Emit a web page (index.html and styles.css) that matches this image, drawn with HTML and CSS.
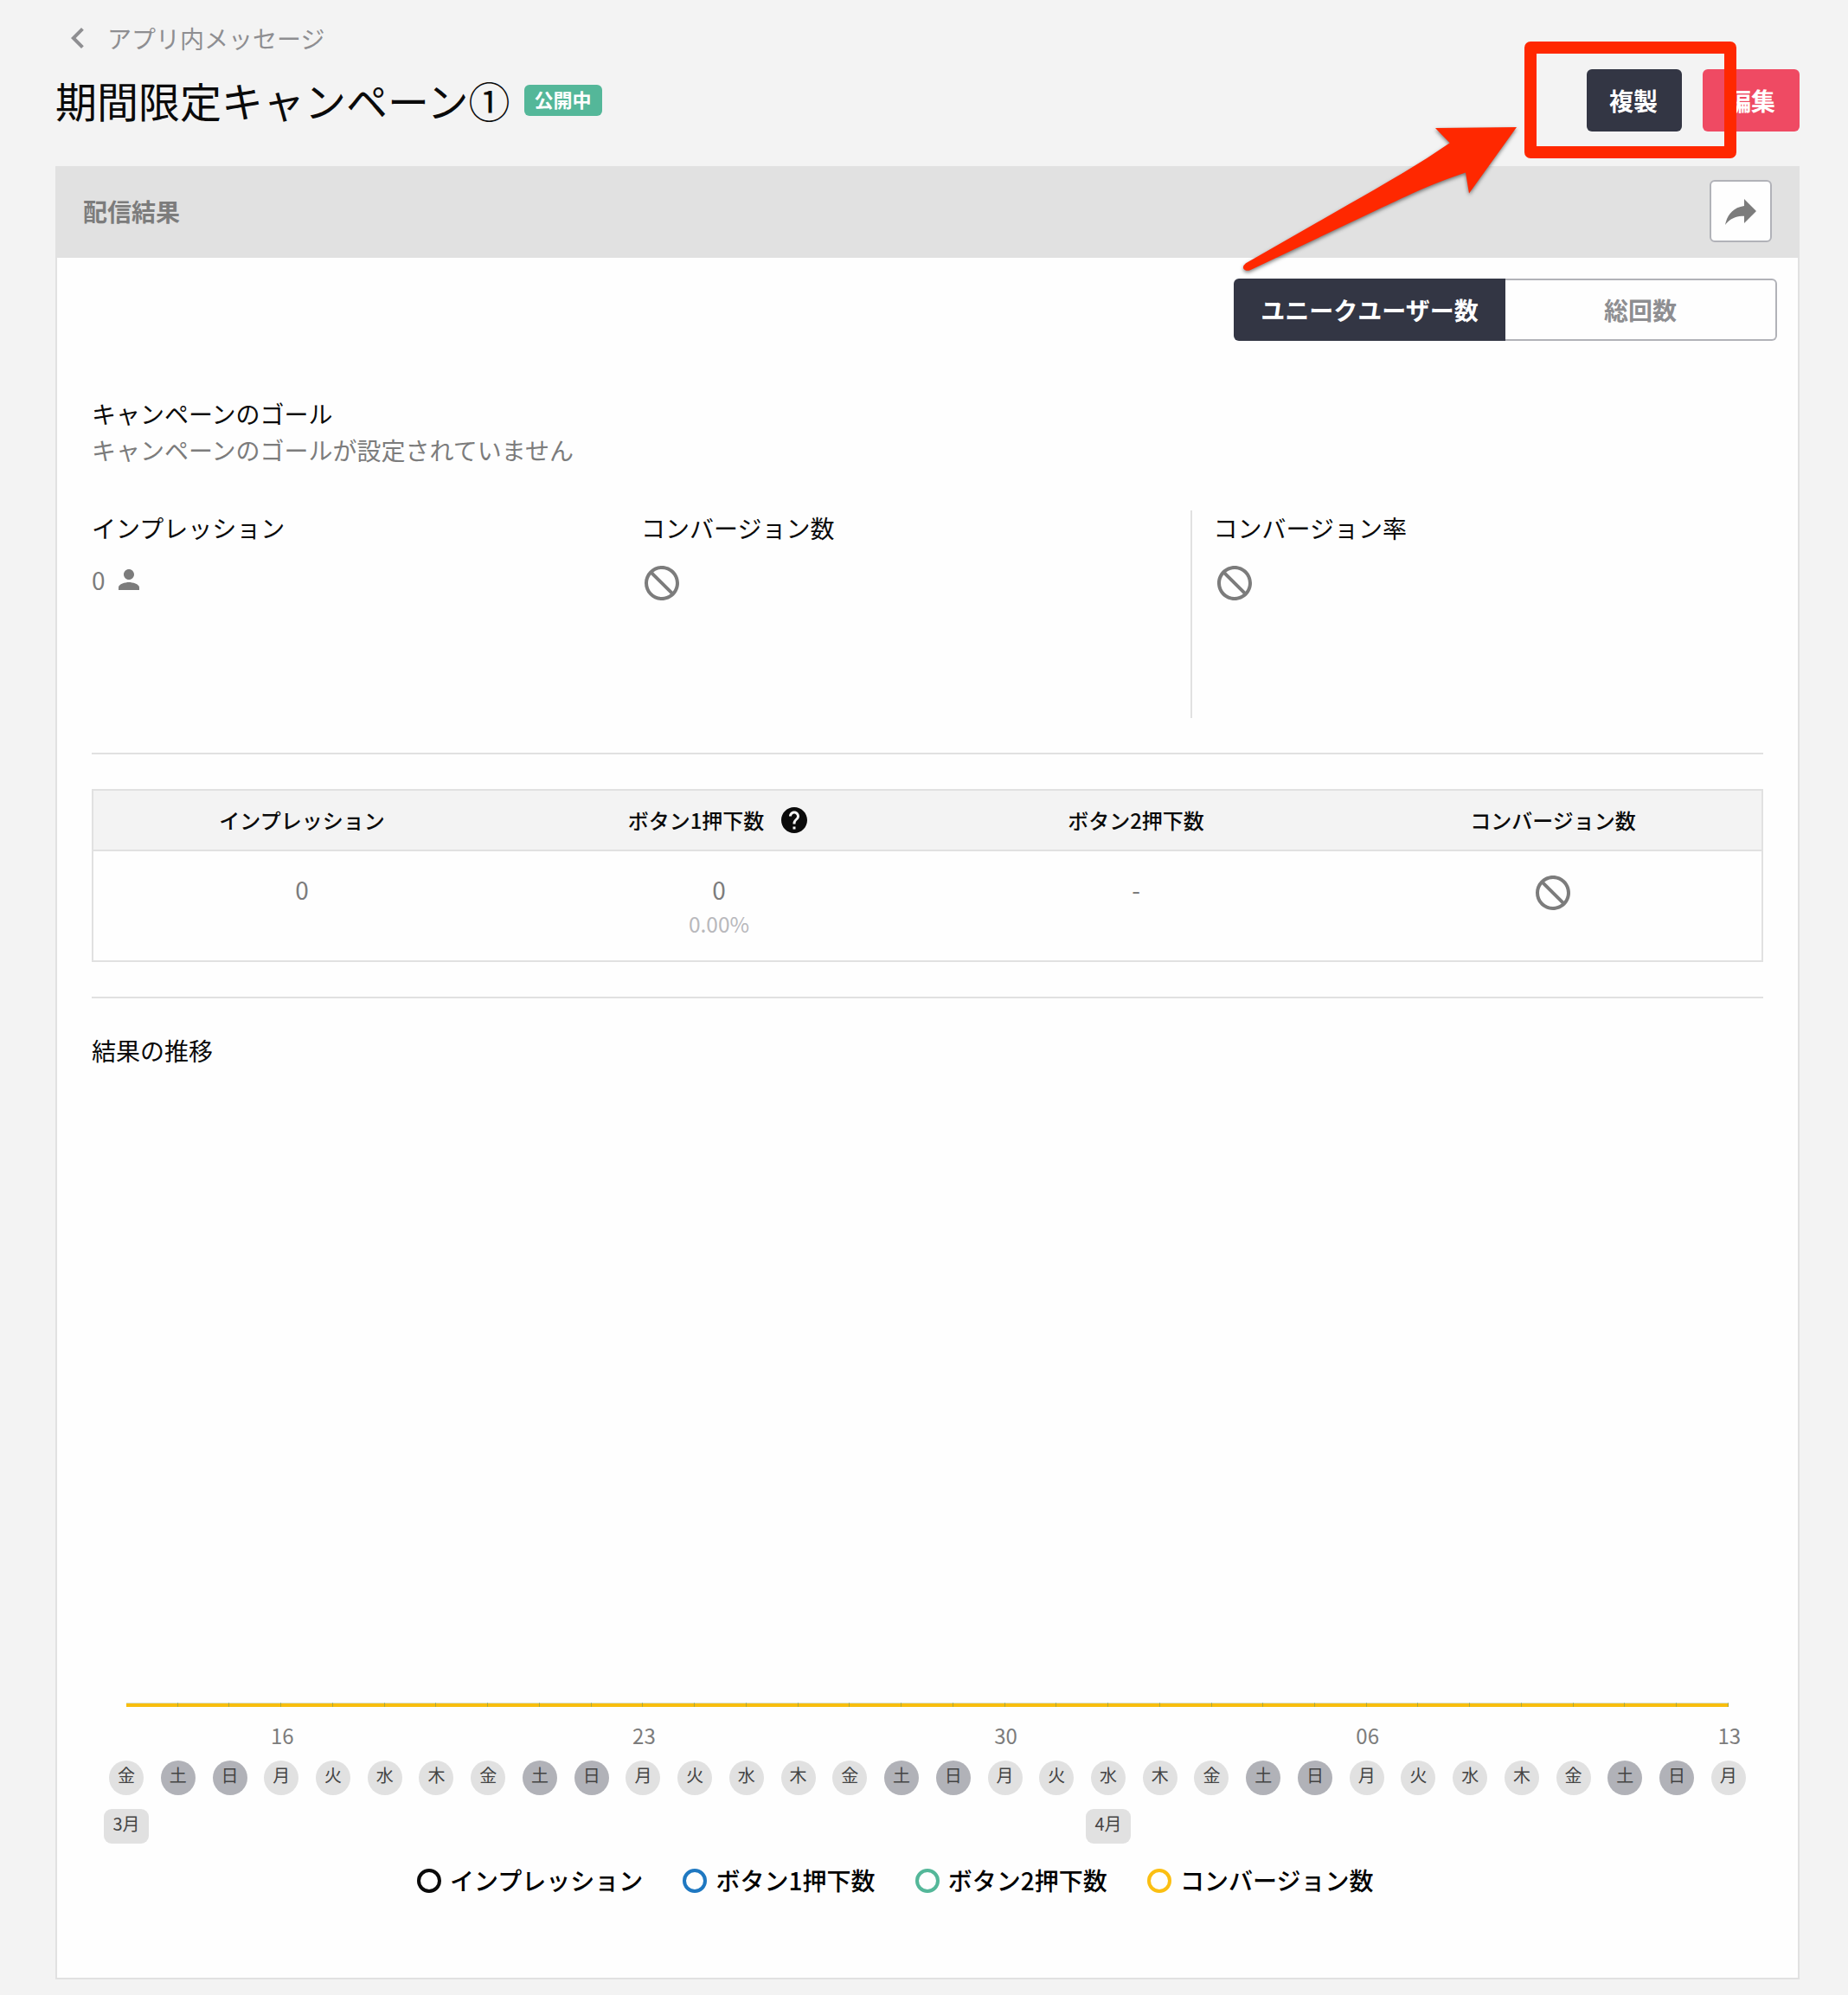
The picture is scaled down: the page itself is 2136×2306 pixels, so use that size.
FILE: index.html
```html
<!DOCTYPE html>
<html lang="ja">
<head>
<meta charset="utf-8">
<title>期間限定キャンペーン①</title>
<link rel="stylesheet" href="styles.css">
</head>
<body>
<svg class="sprite" aria-hidden="true">
  <symbol id="block" viewBox="0 0 24 24"><path transform="matrix(-1 0 0 1 24 0)" d="M12 2C6.48 2 2 6.48 2 12s4.48 10 10 10 10-4.48 10-10S17.52 2 12 2zM4 12c0-4.42 3.58-8 8-8 1.85 0 3.55.63 4.9 1.69L5.69 16.9C4.63 15.55 4 13.85 4 12zm8 8c-1.85 0-3.55-.63-4.9-1.69L18.31 7.1C19.37 8.45 20 10.15 20 12c0 4.42-3.58 8-8 8z"/></symbol>
</svg>
<main class="page">
  <nav class="breadcrumb">
    <svg class="chevron" viewBox="0 0 24 24"><path d="M15.41 7.41L14 6l-6 6 6 6 1.41-1.41L10.83 12z"/></svg>
    <a>アプリ内メッセージ</a>
  </nav>
  <header class="title-row">
    <h1>期間限定キャンペーン①</h1>
    <span class="badge">公開中</span>
    <div class="actions">
      <button class="btn btn-dark">複製</button>
      <button class="btn btn-pink">編集</button>
    </div>
  </header>

  <section class="panel">
    <div class="panel-head">
      <h2>配信結果</h2>
      <button class="share"><svg viewBox="0 0 24 24"><path d="M14 9V5l7 7-7 7v-4.1c-5 0-8.500 1.600-11 5.100 1-5 4-10 11-11z"/></svg></button>
    </div>
    <div class="segment">
      <span class="seg seg-on">ユニークユーザー数</span>
      <span class="seg seg-off">総回数</span>
    </div>
    <div class="content">
      <div class="goal">
        <p>キャンペーンのゴール</p>
        <p class="muted">キャンペーンのゴールが設定されていません</p>
      </div>
      <div class="stats">
        <div class="stat">
          <p>インプレッション</p>
          <div class="value"><span>0</span><svg class="person" viewBox="0 0 24 24"><path d="M12 12c2.210 0 4-1.790 4-4s-1.790-4-4-4-4 1.790-4 4 1.790 4 4 4zm0 2c-2.670 0-8 1.340-8 4v2h16v-2c0-2.660-5.330-4-8-4z"/></svg></div>
        </div>
        <div class="stat">
          <p>コンバージョン数</p>
          <svg class="block"><use href="#block"/></svg>
        </div>
        <div class="stat stat-rate">
          <p>コンバージョン率</p>
          <svg class="block"><use href="#block"/></svg>
        </div>
      </div>
      <hr>
      <div class="table">
        <div class="row row-head">
          <div>インプレッション</div>
          <div>ボタン1押下数<svg class="help" viewBox="0 0 24 24"><path d="M12 2C6.480 2 2 6.480 2 12s4.480 10 10 10 10-4.480 10-10S17.520 2 12 2zm1 17h-2v-2h2v2zm2.070-7.750l-.9.920C13.450 12.900 13 13.500 13 15h-2v-.5c0-1.100.45-2.100 1.170-2.830l1.240-1.260c.37-.36.59-.86.59-1.410 0-1.100-.9-2-2-2s-2 .9-2 2H8c0-2.210 1.790-4 4-4s4 1.790 4 4c0 .88-.36 1.680-.93 2.250z"/></svg></div>
          <div>ボタン2押下数</div>
          <div>コンバージョン数</div>
        </div>
        <div class="row row-body">
          <div>0</div>
          <div>0<small>0.00%</small></div>
          <div>-</div>
          <div><svg class="block"><use href="#block"/></svg></div>
        </div>
      </div>
      <hr>
      <h3>結果の推移</h3>
      <div class="plot"><div class="series"></div></div>
      <div class="axis">
        <div class="day"><i></i><b>金</b><em>3月</em></div>
        <div class="day off"><i></i><b>土</b></div>
        <div class="day off"><i></i><b>日</b></div>
        <div class="day"><i>16</i><b>月</b></div>
        <div class="day"><i></i><b>火</b></div>
        <div class="day"><i></i><b>水</b></div>
        <div class="day"><i></i><b>木</b></div>
        <div class="day"><i></i><b>金</b></div>
        <div class="day off"><i></i><b>土</b></div>
        <div class="day off"><i></i><b>日</b></div>
        <div class="day"><i>23</i><b>月</b></div>
        <div class="day"><i></i><b>火</b></div>
        <div class="day"><i></i><b>水</b></div>
        <div class="day"><i></i><b>木</b></div>
        <div class="day"><i></i><b>金</b></div>
        <div class="day off"><i></i><b>土</b></div>
        <div class="day off"><i></i><b>日</b></div>
        <div class="day"><i>30</i><b>月</b></div>
        <div class="day"><i></i><b>火</b></div>
        <div class="day"><i></i><b>水</b><em>4月</em></div>
        <div class="day"><i></i><b>木</b></div>
        <div class="day"><i></i><b>金</b></div>
        <div class="day off"><i></i><b>土</b></div>
        <div class="day off"><i></i><b>日</b></div>
        <div class="day"><i>06</i><b>月</b></div>
        <div class="day"><i></i><b>火</b></div>
        <div class="day"><i></i><b>水</b></div>
        <div class="day"><i></i><b>木</b></div>
        <div class="day"><i></i><b>金</b></div>
        <div class="day off"><i></i><b>土</b></div>
        <div class="day off"><i></i><b>日</b></div>
        <div class="day"><i>13</i><b>月</b></div>
      </div>
      <div class="legend">
        <span class="key key-black">インプレッション</span>
        <span class="key key-blue">ボタン1押下数</span>
        <span class="key key-green">ボタン2押下数</span>
        <span class="key key-yellow">コンバージョン数</span>
      </div>
    </div>
  </section>
</main>
<div class="callout-box"></div>
<svg class="callout-arrow" viewBox="1420 130 350 200"><path d="M1753 147L1659 148L1675.700 165.300C1643 188 1600 213 1560 235.500L1440 304.300Q1436.500 307 1437 310Q1439 314 1445 312.300L1593 242C1620 229.500 1650 214 1694 199.500L1698 223.500Z"/></svg>
</body>
</html>
```
FILE: styles.css
```css
*, *::before { box-sizing: border-box; }
body {
  margin: 0;
  position: relative;
  height: 2306px;
  background: #f3f3f3;
  color: #0a0a0a;
  font: 28px/40px "Noto Sans CJK JP", sans-serif;
}
h1, h2, h3, p { margin: 0; }
p { padding-bottom: 2px; }
button { font-family: inherit; padding: 0; border: 0; }
svg { display: block; fill: #7c7c7c; }
.sprite { position: absolute; width: 0; height: 0; }

.page { padding: 24px 56px 0 64px; }
.breadcrumb { display: flex; align-items: center; height: 42px; color: #8e8e91; }
.breadcrumb a { padding-bottom: 2px; }
.chevron { width: 48px; height: 48px; margin: -2px 10px 0 2px; fill: #8e8e91; }
.title-row { display: flex; align-items: center; height: 72px; margin-top: 14px; }
h1 { padding-bottom: 2px; font-size: 48px; font-weight: 400; line-height: 70px; }
.badge {
  width: 90px; height: 36px; margin-left: 16px;
  border-radius: 6px; background: #54b799; color: #fff;
  font-size: 22px; font-weight: 700; line-height: 32px; text-align: center;
}
.actions { display: flex; gap: 24px; margin-left: auto; }
.btn {
  width: 112px; height: 72px; border-radius: 6px;
  color: #fff; font-size: 28px; font-weight: 700; line-height: 72px;
}
.btn-dark { width: 110px; padding-right: 2px; background: #333644; }
.btn-pink { background: #ef4a63; }

.panel { height: 2096px; margin-top: 40px; border: 2px solid #e1e1e1; border-top: 0; background: #fefefe; }
.panel-head {
  display: flex; align-items: center; justify-content: space-between;
  height: 106px; padding: 0 30px 2px; background: #e1e1e1;
}
h2 { font-size: 28px; font-weight: 700; color: #7c7c7c; }
.share {
  display: flex; align-items: center; justify-content: center;
  width: 72px; height: 72px; border: 2px solid #b1b2b8; border-radius: 6px; background: #fefefe;
}
.share svg { flex: none; width: 48px; height: 48px; }
.segment { display: flex; width: 628px; height: 72px; margin: 24px 24px 0 auto; font-weight: 700; text-align: center; }
.seg { width: 314px; line-height: 72px; }
.seg-on { border-radius: 6px 0 0 6px; background: #333644; color: #fff; }
.seg-off { border: 2px solid #b1b2b8; border-left: 0; border-radius: 0 6px 6px 0; line-height: 68px; color: #8e8e91; }

.content { padding: 64px 40px 0; }
.muted { color: #7c7c7c; }
.stats { display: flex; height: 240px; margin: 48px 0 40px; }
.stat { width: 635px; }
.stat-rate { border-left: 2px solid #e1e1e1; padding-left: 24.600px; }
.value { display: flex; align-items: center; height: 42px; margin-top: 18px; color: #7c7c7c; }
.value span { padding-bottom: 2px; }
.person { width: 36px; height: 36px; margin: -2px 0 0 9px; }
.block { width: 48px; height: 48px; }
.stat .block { margin-top: 18px; }
hr { height: 2px; margin: 0; border: 0; background: #e1e1e1; }

.table { margin: 40px 0; border: 2px solid #e1e1e1; }
.row { display: grid; grid-template-columns: repeat(4, 1fr); text-align: center; }
.row > div { display: flex; align-items: center; justify-content: center; }
.row-head { height: 70px; border-bottom: 2px solid #e1e1e1; background: #f3f3f3; font-size: 24px; font-weight: 500; line-height: 36px; }
.help { width: 36px; height: 36px; margin-left: 17px; fill: #0a0a0a; }
.row-body { height: 126px; padding-top: 24px; color: #7c7c7c; }
.row-body > div { flex-direction: column; justify-content: flex-start; }
.row-body small { margin-top: 2px; font-size: 24.5px; line-height: 36px; color: #b8b8bc; }

h3 { margin-top: 40px; padding-bottom: 2px; font-size: 28px; font-weight: 400; }
.plot { display: flex; align-items: flex-end; height: 737px; padding: 0 40px; }
.series {
  width: 100%; height: 5px;
  background:
    repeating-linear-gradient(90deg, transparent 0 58.740px, rgba(84, 140, 110, .45) 58.740px 59.740px),
    linear-gradient(#d9dfcb 0 1px, #f8be0e 1px);
}
.axis { display: grid; grid-template-columns: repeat(32, 59.740px); height: 158px; margin-left: 10.200px; padding-top: 16px; }
.day { display: flex; flex-direction: column; align-items: center; }
.day i { height: 36px; padding-left: 2px; font-size: 24px; font-style: normal; line-height: 34px; color: #7c7c7c; }
.day b, .day em {
  flex: none; width: 40px; height: 40px; margin-top: 10px; border-radius: 50%; background: #e1e1e1;
  font-size: 20px; font-weight: 400; font-style: normal; line-height: 34px; text-align: center; color: #444;
}
.day em { width: 52px; margin-top: 16px; border-radius: 9px; }
.off b { background: #b1b2b8; }
.legend { display: flex; gap: 46.300px; margin: 22px 0 0 376px; font-weight: 500; line-height: 40px; }
.key { display: flex; align-items: center; gap: 10px; height: 40px; color: #000; }
.key::before { content: ""; width: 28px; height: 28px; margin-top: 2px; border: 4px solid #0a0a0a; border-radius: 50%; }
.key-blue::before { border-color: #1f78c1; }
.key-green::before { border-color: #54b799; }
.key-yellow::before { border-color: #fbbf12; }

/* annotation drawn over the page */
.callout-box { position: absolute; left: 1762px; top: 48px; width: 245px; height: 135px; border: 14px solid #ff2800; border-radius: 7px; }
.callout-arrow { position: absolute; left: 1420px; top: 130px; width: 350px; height: 200px; fill: #ff2800; filter: drop-shadow(0 2px 2px rgba(0, 0, 0, .5)); }
```
